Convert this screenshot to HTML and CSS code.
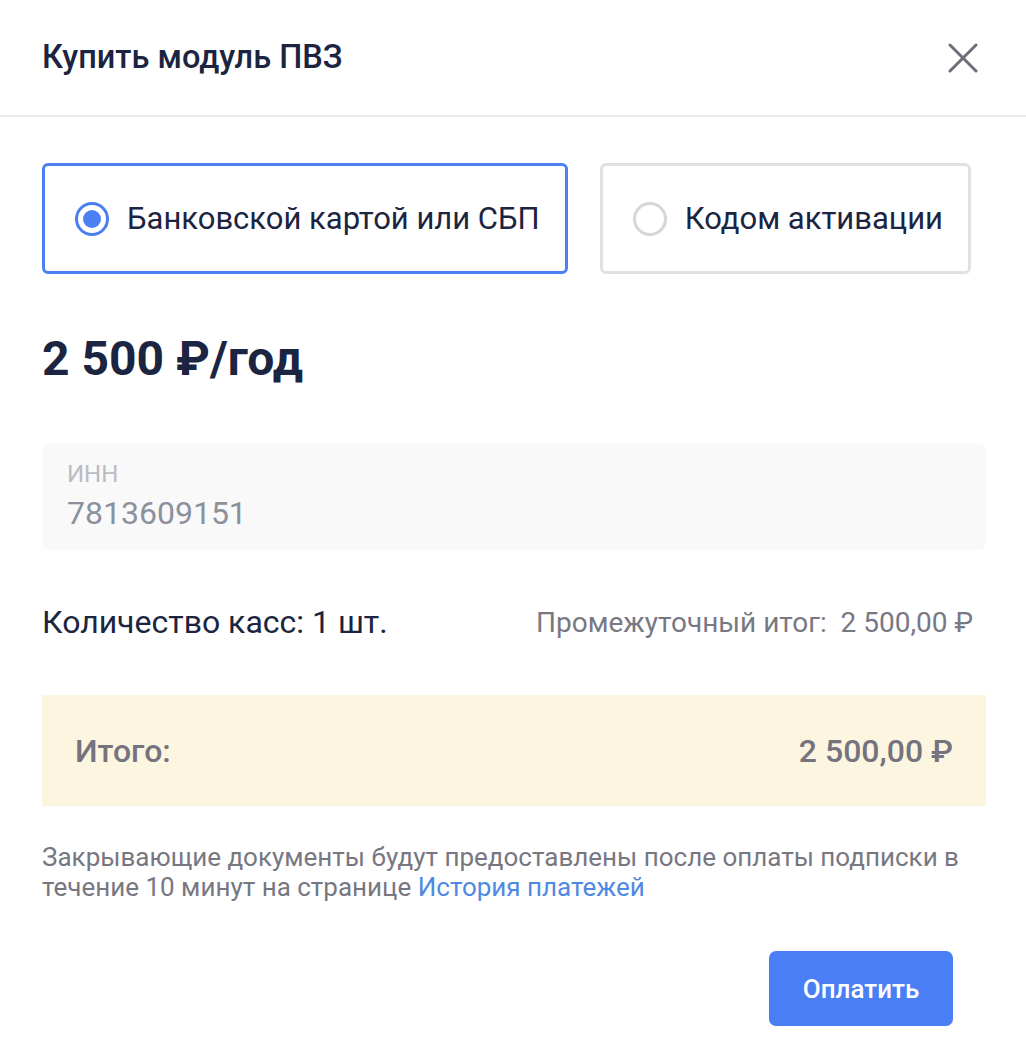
FILE: index.html
```html
<!DOCTYPE html>
<html lang="ru">
<head>
    <meta charset="UTF-8">
    <meta name="viewport" content="width=device-width, initial-scale=1.0">
    <title>Купить модуль ПВЗ</title>
    <link rel="stylesheet" href="styles.css">
</head>
<body>
    <div class="modal">
        <div class="modal-header">
            <h1 class="modal-title">Купить модуль ПВЗ</h1>
            <button class="close-btn" aria-label="Закрыть">
                <svg width="30" height="30" viewBox="0 0 30 30">
                    <path d="M2 2 L28 28 M28 2 L2 28" stroke="#6e6d78" stroke-width="3" stroke-linecap="round" fill="none"/>
                </svg>
            </button>
        </div>

        <div class="modal-body">
            <div class="pay-options">
                <label class="pay-option active">
                    <span class="radio checked"></span>
                    <span class="pay-label">Банковской картой или СБП</span>
                </label>
                <label class="pay-option">
                    <span class="radio"></span>
                    <span class="pay-label">Кодом активации</span>
                </label>
            </div>

            <div class="price">2 500 ₽/год</div>

            <div class="field">
                <div class="field-label">ИНН</div>
                <div class="field-value">7813609151</div>
            </div>

            <div class="summary-row">
                <div class="count">Количество касс: 1 шт.</div>
                <div class="subtotal">Промежуточный итог:&nbsp; 2 500,00 ₽</div>
            </div>

            <div class="total">
                <span>Итого:</span>
                <span>2 500,00 ₽</span>
            </div>

            <p class="note">Закрывающие документы будут предоставлены после оплаты подписки в течение 10 минут на странице <a href="#" class="link">История платежей</a></p>

            <div class="actions">
                <button class="pay-btn">Оплатить</button>
            </div>
        </div>
    </div>
</body>
</html>
```

FILE: styles.css
```css
* {
    margin: 0;
    padding: 0;
    box-sizing: border-box;
}
body {
    font-family: Roboto, 'Noto Sans', sans-serif;
    background: #fff;
    color: #1b2440;
}
.modal {
    width: 1026px;
}
.modal-header {
    height: 117px;
    padding: 0 48px 0 42px;
    display: flex;
    justify-content: space-between;
    align-items: center;
    border-bottom: 2px solid #ebebee;
}
.modal-title {
    font-size: 32.5px;
    font-weight: 500;
    color: #1b2440;
    margin-top: -2px;
}
.close-btn {
    background: none;
    border: none;
    cursor: pointer;
    display: flex;
}
.modal-body {
    padding: 46px 40px 0 42px;
}
.pay-options {
    display: flex;
    gap: 32px;
}
.pay-option {
    display: flex;
    align-items: center;
    gap: 18px;
    height: 111px;
    padding: 0 25px 0 30px;
    border: 3px solid #e1e1e5;
    border-radius: 6px;
    cursor: pointer;
}
.pay-option.active {
    border-color: #4a80f2;
}
.radio {
    width: 34px;
    height: 34px;
    border-radius: 50%;
    border: 3px solid #d5d5da;
    display: flex;
    align-items: center;
    justify-content: center;
}
.radio.checked {
    border-color: #4a80f2;
}
.radio.checked::after {
    content: '';
    width: 18px;
    height: 18px;
    border-radius: 50%;
    background: #4a80f2;
}
.pay-label {
    font-size: 31px;
    color: #1b2440;
}
.price {
    margin-top: 57px;
    font-size: 48px;
    line-height: 56px;
    font-weight: 700;
    color: #1b2440;
}
.field {
    margin-top: 56px;
    height: 107px;
    background: #f9f9f9;
    border-radius: 8px;
    padding: 17px 25px 0;
}
.field-label {
    font-size: 24px;
    line-height: 28px;
    color: #bcbbc3;
}
.field-value {
    margin-top: 7px;
    font-size: 32px;
    line-height: 36px;
    color: #8b909d;
}
.summary-row {
    display: flex;
    justify-content: space-between;
    align-items: center;
    margin-top: 53px;
    height: 38px;
    padding-right: 13px;
}
.count {
    font-size: 32px;
    line-height: 38px;
    color: #1b2440;
}
.subtotal {
    font-size: 28px;
    color: #787883;
}
.total {
    margin-top: 54px;
    height: 111px;
    background: #fcf6e0;
    display: flex;
    justify-content: space-between;
    align-items: center;
    padding: 0 33px;
    font-size: 32px;
    font-weight: 500;
    color: #75737d;
}
.note {
    margin-top: 36px;
    margin-right: -8px;
    font-size: 26px;
    line-height: 30px;
    color: #777782;
}
.link {
    color: #4f89e2;
    text-decoration: none;
}
.actions {
    display: flex;
    justify-content: flex-end;
    margin-top: 49px;
    padding-right: 33px;
}
.pay-btn {
    width: 184px;
    height: 75px;
    background: #4a7ef5;
    color: #fff;
    border: none;
    border-radius: 7px;
    font-family: Roboto, sans-serif;
    font-size: 26px;
    font-weight: 500;
    cursor: pointer;
}
```
